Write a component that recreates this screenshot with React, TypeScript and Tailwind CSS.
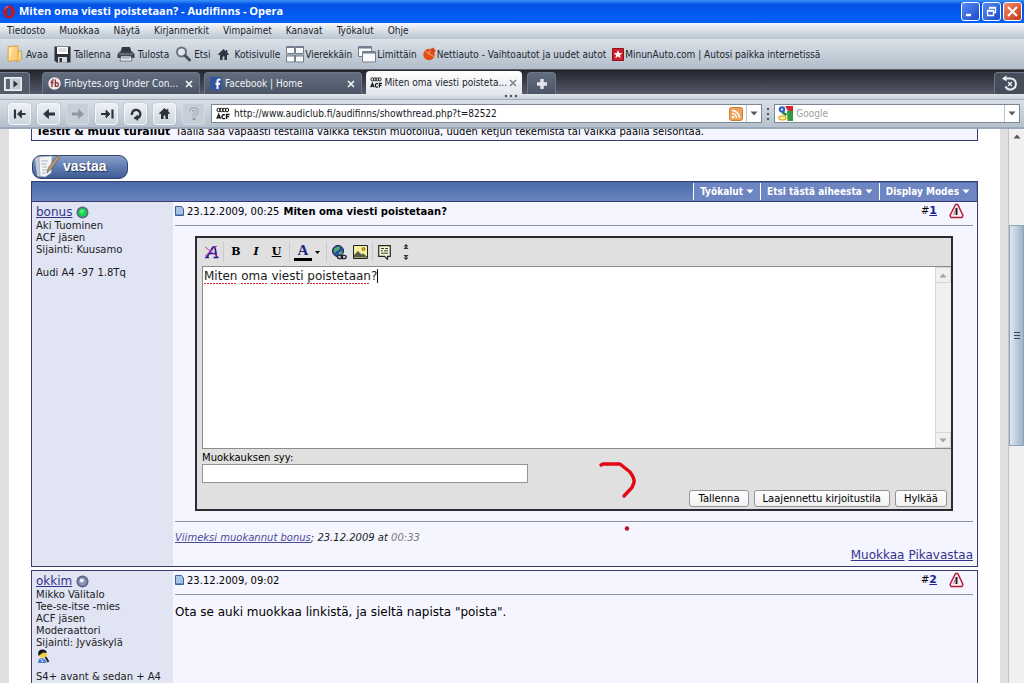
import React from "react";

const UI = "font-['DejaVu_Sans_Condensed','DejaVu_Sans',sans-serif]";

function OperaLogo() {
  return (
    <svg width="14" height="14" viewBox="0 0 14 14" aria-hidden="true">
      <ellipse cx="7" cy="7" rx="6" ry="6.5" fill="#c8141e" />
      <ellipse cx="7" cy="7" rx="2.2" ry="4.6" fill="#0a4fd0" />
      <path d="M2.5 4.5Q3.5 1.5 6.5 1.2" stroke="#f07a7a" fill="none" />
    </svg>
  );
}

function WindowButton({ label, red, children }: { label: string; red?: boolean; children: React.ReactNode }) {
  return (
    <button
      aria-label={label}
      className={
        "flex h-[19px] w-[19px] items-center justify-center rounded-[3px] border border-white " +
        (red ? "bg-linear-to-br from-[#f08a68] to-[#c8320c]" : "bg-linear-to-br from-[#5a8cf0] to-[#1c48c8]")
      }
    >
      <svg width="15" height="15" viewBox="0 0 15 15" fill="none" stroke="#fff" aria-hidden="true">
        {children}
      </svg>
    </button>
  );
}

function TitleBar() {
  return (
    <header className="flex h-[23px] shrink-0 items-center gap-[3px] bg-linear-to-b from-[#3a92f8] via-[#0452e4] via-20% to-[#0262fc] pl-[2px] pr-[2px]">
      <OperaLogo />
      <h1 className="flex-1 whitespace-nowrap font-['Open_Sans',sans-serif] text-[11px] font-bold text-white">
        Miten oma viesti poistetaan? - Audifinns - Opera
      </h1>
      <div className="flex gap-[2px]">
        <WindowButton label="Minimize">
          <path d="M3 11h5" strokeWidth="2.4" />
        </WindowButton>
        <WindowButton label="Restore">
          <path d="M5.5 5V3.5h6v5H10M5.5 4h6" strokeWidth="1.3" />
          <path d="M3.5 6.5h6v5h-6zM3.5 7h6" strokeWidth="1.3" />
        </WindowButton>
        <WindowButton label="Close" red>
          <path d="M3 3l9 9M12 3l-9 9" strokeWidth="2" />
        </WindowButton>
      </div>
    </header>
  );
}

function MenuBar() {
  const items = ["Tiedosto", "Muokkaa", "Näytä", "Kirjanmerkit", "Vimpaimet", "Kanavat", "Työkalut", "Ohje"];
  return (
    <nav className="flex h-4 shrink-0 items-center gap-[14px] bg-linear-to-b from-[#f6f8fa] to-[#b9c5d1] pl-[7px] text-[#20242c]">
      {items.map((t) => (
        <button key={t} className="leading-4">
          {t}
        </button>
      ))}
    </nav>
  );
}

const HOUSE = "M6.5 1L1 6.3l1 1L3 6.5V12h2.6V8.6h1.8V12H10V6.5l1 .8 1-1L10.300 4.600V2H8.800v1.200z";

function HomeIcon({ size = 13 }: { size?: number }) {
  return (
    <svg width={size} height={size} viewBox="0 0 13 13" fill="#30353f" aria-hidden="true">
      <path d={HOUSE} />
    </svg>
  );
}

function BookmarkIcon({ kind }: { kind: string }) {
  switch (kind) {
    case "open":
      return (
        <svg width="16" height="18" viewBox="0 0 16 18">
          <path d="M9 6h5.500v8l-3 2.500H9z" fill="#f5d68c" stroke="#c79642" strokeWidth=".8" />
          <path d="M1 1.500L11 .8v14.400L1 16.500z" fill="#fbcf7c" stroke="#d39b41" strokeWidth=".8" />
          <path d="M2 2.500l4-.3-3 12.500-1 .3z" fill="#ffe7b0" />
        </svg>
      );
    case "save":
      return (
        <svg width="17" height="17" viewBox="0 0 17 17">
          <path d="M.5.5h16v16h-14l-2-2z" fill="#2e3138" />
          <path d="M3 1h11v7H3z" fill="#fff" />
          <path d="M4.500 3h8M4.500 5h8" stroke="#b8bcc4" />
          <path d="M4 11h9v5.500H4z" fill="#d5d9df" />
          <path d="M5.500 12h2.500v4H5.500z" fill="#2e3138" />
        </svg>
      );
    case "print":
      return (
        <svg width="18" height="16" viewBox="0 0 18 16">
          <path d="M5 1h8l1.500 5h-11z" fill="#32363e" />
          <path d="M3 5.500h12l2.500 2.500v4H.5V8z" fill="#3a3f49" />
          <path d="M2 8h14" stroke="#929aa6" />
          <path d="M4 10h10l1 5H3z" fill="#eef1f4" stroke="#5a616c" strokeWidth=".8" />
          <path d="M5 12h8" stroke="#7a828e" />
        </svg>
      );
    case "find":
      return (
        <svg width="16" height="16" viewBox="0 0 16 16" fill="none">
          <circle cx="6.500" cy="6" r="4.500" stroke="#6a717d" strokeWidth="2" fill="#dfe5eb" />
          <path d="M10 9.500l4.500 4.500" stroke="#4b525e" strokeWidth="3" strokeLinecap="round" />
        </svg>
      );
    case "home":
      return <HomeIcon />;
    case "tile":
      return (
        <svg width="18" height="17" viewBox="0 0 18 17" stroke="#747e8e" fill="#f8fafc">
          <path d="M.5.5h8v7h-8zM9.500.5h8v7h-8zM.5 9h8v7h-8zM9.500 9h8v7h-8z" />
          <path d="M1 1.500h7M10 1.500h7M1 10h7M10 10h7" />
        </svg>
      );
    case "cascade":
      return (
        <svg width="18" height="17" viewBox="0 0 18 17" stroke="#747e8e" fill="#f8fafc">
          <path d="M.5.5h13v10H.5z" />
          <path d="M1 1.500h12" strokeWidth="2" />
          <path d="M4.500 5.500h13v10.500h-13z" />
          <path d="M5 6.500h12" strokeWidth="2" />
        </svg>
      );
    case "netti":
      return (
        <svg width="13" height="14" viewBox="0 0 13 14">
          <circle cx="6" cy="7.500" r="5.700" fill="#e14d18" />
          <path d="M7 2.500L10 .500l2.700 3-1.700 2.500z" fill="#d9430f" />
          <path d="M2.500 4.500l8 5M7.500 3L5 7.500" stroke="#f8b088" fill="none" strokeWidth=".9" />
        </svg>
      );
    default:
      return (
        <svg width="12" height="13" viewBox="0 0 12 13">
          <path d="M.5.5h11v12H.5z" fill="#cf1f2b" stroke="#8e1119" />
          <path d="M6 2l1.200 3 3.100.2-2.400 2 .8 3.100L6 8.600l-2.700 1.700.8-3.100-2.400-2 3.100-.2z" fill="#fff" />
        </svg>
      );
  }
}

function BookmarksBar() {
  const items: [string, string, string][] = [
    ["open", "Avaa", "gap-[3px]"],
    ["save", "Tallenna", "gap-[3px]"],
    ["print", "Tulosta", "gap-[3px]"],
    ["find", "Etsi", "gap-[3px]"],
    ["home", "Kotisivulle", "gap-[5px]"],
    ["tile", "Vierekkäin", "gap-[1px]"],
    ["cascade", "Limittäin", "gap-[1px]"],
    ["netti", "Nettiauto - Vaihtoautot ja uudet autot", "gap-[1px]"],
    ["minun", "MinunAuto.com | Autosi paikka internetissä", "gap-[1px]"],
  ];
  return (
    <nav className="flex h-[31px] shrink-0 items-center gap-[6px] border-b border-[#5a616d] bg-linear-to-b from-[#dbe2e9] to-[#b1bdca] pl-[7px] text-[#20242c]">
      {items.map(([kind, label, gap]) => (
        <button key={kind} className={"flex items-center whitespace-nowrap " + gap}>
          <BookmarkIcon kind={kind} />
          {label}
        </button>
      ))}
    </nav>
  );
}

function CloseX({ color }: { color: string }) {
  return (
    <svg width="8" height="8" viewBox="0 0 8 8" aria-hidden="true">
      <path d="M1 1l6 6M7 1L1 7" stroke={color} strokeWidth="1.700" />
    </svg>
  );
}

function AcfIcon() {
  return (
    <svg width="14" height="13" viewBox="0 0 14 13" aria-hidden="true" fill="none" stroke="#111">
      <ellipse cx="2.600" cy="3" rx="1.600" ry="1.800" />
      <ellipse cx="5.400" cy="3" rx="1.600" ry="1.800" />
      <ellipse cx="8.200" cy="3" rx="1.600" ry="1.800" />
      <ellipse cx="11" cy="3" rx="1.600" ry="1.800" />
      <path d="M.8 11.800L2.700 7.300l1.900 4.500M1.500 10.500h2.400M9 8q-3-1-3 1.700t3 1.600M10.500 12V7.500h3M10.500 9.700h2.500" strokeWidth="1.300" />
    </svg>
  );
}

function TabStrip() {
  const idle =
    "flex h-[22px] w-[158px] items-center gap-[3px] rounded-t-[4px] border-x border-t border-[#6b7688] bg-linear-to-b from-[#626d7e] to-[#4b5566] pl-[5px] pr-[6px] text-[#f2f4f8]";
  return (
    <div className="flex h-6 shrink-0 items-end bg-linear-to-b from-[#24262e] to-[#565a6a]">
      <button
        aria-label="Panels"
        className="mr-[12px] flex h-[22px] w-[30px] items-center rounded-tr-[4px] border-r border-t border-[#77808e] bg-[#515b6a] pl-1"
      >
        <svg width="18" height="14" viewBox="0 0 18 14">
          <path d="M.5.5h17v13H.5z" fill="#d5dbe3" stroke="#eef1f4" />
          <path d="M2 2h4v10H2z" fill="#5b6575" />
          <path d="M8 2h8v10H8z" fill="#c1c9d3" />
          <path d="M9.500 3.500l4.500 3.500-4.500 3.500z" fill="#2c323c" />
        </svg>
      </button>
      <div className="mr-[4px]">
        <div className={idle}>
          <svg width="13" height="13" viewBox="0 0 13 13">
            <circle cx="6.500" cy="6.500" r="6.200" fill="#efe6e6" />
            <path d="M5.800 3Q3.800 2.500 4 4.500V10M2.600 5.500h3M7.300 2.500V9.500M7.300 6q3-1 3 1.500t-3 1.800" stroke="#8d2b35" fill="none" strokeWidth="1.300" />
          </svg>
          <span className="flex-1 whitespace-nowrap">Finbytes.org Under Con...</span>
          <button aria-label="Close tab">
            <CloseX color="#f0f2f6" />
          </button>
        </div>
      </div>
      <div className="mr-[4px]">
        <div className={idle}>
          <svg width="12" height="13" viewBox="0 0 12 13">
            <path d="M0 0h12v13H0z" fill="#3355a0" />
            <path d="M10.500 2.500H9Q7.500 2.500 7.500 4.500V12M5.500 6.800h4.500" stroke="#fff" fill="none" strokeWidth="2" />
          </svg>
          <span className="flex-1 whitespace-nowrap">Facebook | Home</span>
          <button aria-label="Close tab">
            <CloseX color="#f0f2f6" />
          </button>
        </div>
      </div>
      <div className="mr-[5px] flex h-[23px] w-[156px] items-center gap-[2px] rounded-t-[4px] bg-linear-to-b from-white to-[#e2e7ec] pl-1 pr-[5px] text-[#20242c]">
        <AcfIcon />
        <span className="flex-1 whitespace-nowrap">Miten oma viesti poisteta...</span>
        <button aria-label="Close tab">
          <CloseX color="#85888e" />
        </button>
      </div>
      <button
        aria-label="New tab"
        className="flex h-[22px] w-[29px] items-center justify-center rounded-t-[4px] border-x border-t border-[#6b7688] bg-linear-to-b from-[#626d7e] to-[#4b5566]"
      >
        <svg width="12" height="12" viewBox="0 0 12 12">
          <path d="M6 1v10M1 6h10" stroke="#e3e7ec" strokeWidth="3.400" />
        </svg>
      </button>
      <button
        aria-label="Closed tabs"
        className="ml-auto flex h-[22px] w-[30px] items-center justify-center rounded-tl-[4px] border-l border-t border-[#6b7688] bg-[#464c59]"
      >
        <svg width="17" height="17" viewBox="0 0 17 17" fill="none" stroke="#eef1f4">
          <path d="M4 3.500h5.500a5.500 5.500 0 1 1-5 8" strokeWidth="2" />
          <path d="M5.500.5v6L1 3.500z" fill="#eef1f4" stroke="none" />
          <path d="M7 7l4 4M11 7l-4 4" strokeWidth="1.300" />
        </svg>
      </button>
    </div>
  );
}

function NavButton({ label, dim, children }: { label: string; dim?: boolean; children: React.ReactNode }) {
  return (
    <button
      aria-label={label}
      className={
        "flex h-[22px] w-[23px] items-center justify-center rounded-[3px] border " +
        (dim ? "border-[#d2d9e0] bg-[#c6cfd8]" : "border-[#f4f7f9] bg-linear-to-b from-[#edf1f5] to-[#ccd5de] shadow-[0_0_1px_#76808c]")
      }
    >
      <svg width="14" height="14" viewBox="0 0 14 14" fill="none" stroke={dim ? "#8e98a4" : "#2c323c"} strokeWidth="2.200">
        {children}
      </svg>
    </button>
  );
}

function DropArrow({ className }: { className?: string }) {
  return (
    <svg width="8" height="5" viewBox="0 0 8 5" className={className} aria-hidden="true">
      <path d="M.5.500h7L4 4.500z" fill="currentColor" />
    </svg>
  );
}

function AddressBar() {
  return (
    <>
      <div className="flex h-[6px] shrink-0 items-start border-b border-[#a3adb9] bg-linear-to-b from-[#e2e7ec] to-[#c9d2db] pl-[504px]">
        <svg width="15" height="4" viewBox="0 0 15 4" fill="#4b525e" aria-hidden="true">
          <circle cx="2" cy="2" r="1.200" />
          <circle cx="7" cy="2" r="1.200" />
          <circle cx="12" cy="2" r="1.200" />
        </svg>
      </div>
      <div className="flex h-[29px] shrink-0 items-center border-b-2 border-[#9aa8b7] bg-linear-to-b from-[#d8dfe6] to-[#b5c1ce] pl-2 pr-1">
        <div className="flex gap-[6px]">
          <NavButton label="Rewind">
            <path d="M2 2.500v9M12.500 7H6" />
            <path d="M8.500 3L4.500 7l4 4z" fill="#2c323c" strokeWidth=".8" />
          </NavButton>
          <NavButton label="Back">
            <path d="M13 7H5" strokeWidth="3" />
            <path d="M6.500 2.500L1.500 7l5 4.500z" fill="#2c323c" strokeWidth=".8" />
          </NavButton>
          <NavButton label="Forward" dim>
            <path d="M1 7h8" strokeWidth="3" />
            <path d="M7.500 2.500l5 4.500-5 4.500z" fill="#8e98a4" strokeWidth=".8" />
          </NavButton>
          <NavButton label="Fast forward">
            <path d="M12.500 2.500v9M1 7h6" />
            <path d="M6 3l4 4-4 4z" fill="#2c323c" strokeWidth=".8" />
          </NavButton>
          <NavButton label="Reload">
            <path d="M3 8a4.200 4.200 0 1 1 5 3.200" strokeWidth="2.400" />
            <path d="M8.800 8v5.500L4.800 11z" fill="#2c323c" strokeWidth=".5" />
          </NavButton>
          <NavButton label="Home">
            <path d={HOUSE} fill="#2c323c" stroke="none" />
          </NavButton>
          <NavButton label="Wand" dim>
            <path d="M4 4.800Q4 2 7 2t3 2.600Q10 6 8.500 6.800T7 9.500M7 11v2" strokeWidth="3" />
            <path d="M4 4.800Q4 2 7 2t3 2.600Q10 6 8.500 6.800T7 9.500" stroke="#e3e8ed" strokeWidth="1.200" />
          </NavButton>
        </div>
        <div className="ml-[6px] flex h-[19px] flex-[552] items-center border border-[#7d8894] bg-white">
          <span className="px-1">
            <AcfIcon />
          </span>
          <input
            aria-label="Address"
            defaultValue="http://www.audiclub.fi/audifinns/showthread.php?t=82522"
            className="min-w-0 flex-1 text-[#14171c] outline-none"
          />
          <svg width="14" height="14" viewBox="0 0 14 14" className="mr-[3px]" aria-hidden="true">
            <rect x=".5" y=".5" width="13" height="13" rx="2" fill="#eda25a" stroke="#cf7f33" />
            <circle cx="4" cy="10" r="1.300" fill="#fff" />
            <path d="M3 6.500A4.500 4.500 0 0 1 7.500 11M3 3.500A7.500 7.500 0 0 1 10.500 11" stroke="#fff" strokeWidth="1.500" fill="none" />
          </svg>
          <button aria-label="Address history" className="flex h-full w-[15px] items-center justify-center border-l border-[#b9c1ca] text-[#545a64]">
            <DropArrow />
          </button>
        </div>
        <svg width="12" height="16" viewBox="0 0 12 16" fill="#4b525e" aria-hidden="true">
          <path d="M5 2h2v2H5zM5 7h2v2H5zM5 12h2v2H5z" />
        </svg>
        <div className="flex h-[19px] flex-[245] items-center border border-[#7d8894] bg-white">
          <svg width="15" height="15" viewBox="0 0 15 15" className="mx-[3px]" aria-hidden="true">
            <path d="M7 0h8v5H10z" fill="#d5252c" />
            <path d="M9 5h6v10H9.500z" fill="#2f9a41" />
            <path d="M0 0h7l2 6-3 9H0z" fill="#fff" />
            <circle cx="4" cy="3.500" r="2.200" fill="none" stroke="#2b62c4" strokeWidth="2.200" />
            <path d="M4.500 6.500l4 2.500" stroke="#1d7d38" strokeWidth="2.400" />
            <ellipse cx="4.500" cy="12" rx="3.500" ry="2" fill="#fff3b0" stroke="#e3b52c" strokeWidth="1.600" />
          </svg>
          <input aria-label="Search" placeholder="Google" className="min-w-0 flex-1 outline-none placeholder:text-[#a0a0a0]" />
          <button aria-label="Search engines" className="flex h-full w-[15px] items-center justify-center border-l border-[#b9c1ca] text-[#545a64]">
            <DropArrow />
          </button>
        </div>
      </div>
    </>
  );
}

function ReplyButton() {
  return (
    <button className="ml-px mt-[14px] flex h-6 w-[96px] items-center rounded-[9px] border border-[#33466f] bg-linear-to-b from-[#8aa0c9] via-[#5f7cb2] to-[#3f5c96]">
      <svg width="28" height="24" viewBox="0 0 28 24" aria-hidden="true">
        <path d="M2 3l4-1 2 20-4-1z" fill="#c3cad6" />
        <path d="M6 2l13-1-1 17-6 4-5-1z" fill="#f4f5f7" stroke="#a7adb8" strokeWidth=".7" />
        <path d="M8 6h7M8 9h6M9 12h5M9 15h6M9 18h4" stroke="#a3a9b5" strokeWidth=".9" />
        <path d="M25 .5l2 2-9 11.500-4 4 1.500-5.500z" fill="#b99a7b" stroke="#6f5741" strokeWidth=".7" />
      </svg>
      <span className="ml-[2px] pb-[2px] font-['Liberation_Sans',sans-serif] text-[14px] font-bold text-white [text-shadow:1px_1px_1px_#1f2f55]">
        vastaa
      </span>
    </button>
  );
}

function WarnIcon() {
  return (
    <svg width="15" height="16" viewBox="0 0 15 16" fill="none" aria-hidden="true">
      <path d="M6.500 1.500h2.300L14 12.500l-1 2H2l-1-2z" stroke="#b3183a" strokeWidth="1.500" strokeLinejoin="round" fill="#fbeef1" />
      <path d="M7.500 5v7" stroke="#15151c" strokeWidth="1.900" />
      <path d="M4.500 12L7 5.500" stroke="#c2536c" strokeWidth=".8" />
    </svg>
  );
}

function PostHead({ date, title, no }: { date: string; title?: string; no: number }) {
  return (
    <div className="flex h-[24px] items-center border-b border-[#9293a8] pb-[5px]">
      <svg width="9" height="10" viewBox="0 0 9 10" className="mr-[3px]" aria-hidden="true">
        <path d="M.5.500h6L8.500 3v6.500h-8z" fill="#a9c3e4" stroke="#3e5f96" />
        <path d="M1 8.500h7" stroke="#6b8fc4" />
      </svg>
      <span>{date}</span>
      {title && <strong className="ml-[4px]">{title}</strong>}
      <span className="ml-auto">
        #
        <a href="#post" className="text-[11px] font-bold text-[#22229c] underline">
          {no}
        </a>
      </span>
      <a href="#report" aria-label="Report post" className="ml-3 mr-[9px]">
        <WarnIcon />
      </a>
    </div>
  );
}

function UserLink({ name, online }: { name: string; online?: boolean }) {
  return (
    <div className="flex h-[18px] items-center gap-1 pt-[2px]">
      <a href="#user" className="text-[12px] text-[#33338c] underline">
        {name}
      </a>
      <svg width="13" height="13" viewBox="0 0 13 13" aria-hidden="true">
        <circle cx="6.500" cy="6.500" r="6" fill="#5c6487" />
        <circle cx="6.500" cy="6.500" r="4.300" fill={online ? "#17d44c" : "#8d96b8"} />
        <circle cx="5.800" cy="5.500" r="2" fill={online ? "#4df07a" : "#eef1fa"} />
      </svg>
    </div>
  );
}

function EditorToolbar() {
  return (
    <div className="flex h-[28px] items-center text-black">
      <button aria-label="Remove formatting" className="mx-[2px]">
        <svg width="15" height="14" viewBox="0 0 15 14" fill="none">
          <path d="M3 12L9 2h2l1.500 10M5.500 8.500h6M1 12.500h4M9.500 12.500h5" stroke="#2a1a96" strokeWidth="1.700" />
          <path d="M1 2l13 10M13 1L1 11" stroke="#c23cae" strokeWidth="1" />
        </svg>
      </button>
      <i className="mx-[2px] h-5 border-l border-[#cbcbcb]" />
      <button aria-label="Bold" className="w-[20px] font-['DejaVu_Serif',serif] text-[11px] font-bold">B</button>
      <button aria-label="Italic" className="w-[20px] font-['DejaVu_Serif',serif] text-[11px] font-bold italic">I</button>
      <button aria-label="Underline" className="w-[21px] font-['DejaVu_Serif',serif] text-[11px] underline font-bold">U</button>
      <i className="mx-[2px] h-5 border-l border-[#cbcbcb]" />
      <button aria-label="Text colour" className="flex w-[30px] items-center gap-[3px] pl-[2px]">
        <span className="flex h-[18px] w-[18px] items-start justify-center border-b-[3px] border-black font-['Liberation_Serif',serif] text-[15px] leading-[15px] font-bold text-[#1f2480]">
          A
        </span>
        <svg width="5" height="3" viewBox="0 0 5 3">
          <path d="M0 0h5L2.500 3z" />
        </svg>
      </button>
      <i className="ml-1 mr-[5px] h-5 border-l border-[#cbcbcb]" />
      <button aria-label="Insert link">
        <svg width="15" height="15" viewBox="0 0 15 15">
          <circle cx="6" cy="6" r="5.500" fill="#2b4fa8" stroke="#14224e" />
          <path d="M2 4q3-3 6-2l-1 3-3 1-1 2-1-1zM7 7l4-1-1 3-3 1z" fill="#55b06a" />
          <ellipse cx="8" cy="12" rx="2.600" ry="1.700" fill="#dfe2e8" stroke="#20242c" strokeWidth="1.200" />
          <ellipse cx="11.700" cy="12" rx="2.600" ry="1.700" fill="none" stroke="#20242c" strokeWidth="1.200" />
        </svg>
      </button>
      <button aria-label="Insert image" className="ml-[6px]">
        <svg width="15" height="14" viewBox="0 0 15 14">
          <path d="M.5.500h14v13H.5z" fill="#f5ee9a" stroke="#20242c" />
          <circle cx="10.500" cy="4" r="1.500" fill="#e3a21e" stroke="#6b4a05" strokeWidth=".6" />
          <path d="M1 12.500V10l4-4 3.500 3.500L10 8.500l4 3v1z" fill="#5a5b42" />
        </svg>
      </button>
      <i className="ml-[4px] mr-[5px] h-5 border-l border-[#cbcbcb]" />
      <button aria-label="Quote">
        <svg width="13" height="15" viewBox="0 0 13 15">
          <path d="M.700.700h11.600v10.600H9.500v3L6.500 11.300H.700z" fill="#f8f6d2" stroke="#26262a" strokeWidth="1.200" />
          <path d="M3 3.500h3M7 3.500h3M3 5.800h2M6 5.800h4M3 8.200h7" stroke="#3a3a3e" />
        </svg>
      </button>
      <button aria-label="Resize editor" className="ml-3">
        <svg width="6" height="16" viewBox="0 0 6 16">
          <path d="M3 0l2.500 2.500h-5zM3 2.500L5.500 5h-5zM3 16L.500 13.500h5zM3 13.500L.500 11h5z" fill="#2b2b2b" />
        </svg>
      </button>
    </div>
  );
}

function FormButton({ children }: { children: React.ReactNode }) {
  return (
    <button className="h-[17px] rounded-[3px] border border-[#949494] bg-linear-to-b from-white to-[#f1f1f1] px-2 leading-[15px]">
      {children}
    </button>
  );
}

function Editor() {
  return (
    <form className="relative ml-5 mr-[20px] mt-[10px] border-2 border-[#2c2c30] bg-[#e0e0e0] pl-[5px]" onSubmit={(e) => e.preventDefault()}>
      <EditorToolbar />
      <div className="relative flex h-[183px] border border-r-0 border-[#8c8c8c] bg-white">
        <textarea
          aria-label="Message"
          spellCheck={false}
          defaultValue="Miten oma viesti poistetaan?"
          className="block h-full min-w-0 flex-1 resize-none overflow-hidden px-[1px] py-[2px] font-['DejaVu_Sans',sans-serif] text-[12px] leading-[15px] text-[#1a1a1a] outline-none"
        />
        <svg className="pointer-events-none absolute left-[1px] top-0 h-[18px] w-[180px]" viewBox="0 0 180 18" aria-hidden="true">
          <path d="M0 16.500h33M37 16.500h26M67 16.500h32M103 16.500h63" stroke="#e02434" strokeDasharray="2 1" />
          <path d="M173.500 2v14" stroke="#111" />
        </svg>
        <div className="flex w-[16px] flex-col items-center justify-between border-l border-[#d6d6d6] bg-[#f0f0f0] text-[#a3a3a3]">
          <span className="flex h-4 w-full items-center justify-center border border-l-0 border-[#d6d6d6]">
            <DropArrow className="rotate-180" />
          </span>
          <span className="flex h-4 w-full items-center justify-center border border-l-0 border-[#d6d6d6]">
            <DropArrow />
          </span>
        </div>
      </div>
      <div className="flex h-[60px] flex-col items-start pt-[3px]">
        <label htmlFor="reason" className="leading-[12px]">
          Muokkauksen syy:
        </label>
        <input id="reason" className="h-[19px] w-[43.500%] border border-[#949494] bg-white px-1 outline-none" />
        <div className="mt-[7px] flex gap-[5px] self-end pr-[4px]">
          <FormButton>Tallenna</FormButton>
          <FormButton>Laajennettu kirjoitustila</FormButton>
          <FormButton>Hylkää</FormButton>
        </div>
      </div>
      <svg className="pointer-events-none absolute left-[401px] top-[222px]" width="42" height="74" viewBox="0 0 42 74" fill="none" aria-hidden="true">
        <path d="M3 5l2-1h17l10 8q5 7 4 10.500l-2 5-8 8.500" stroke="#e30613" strokeWidth="3.400" strokeLinecap="round" strokeLinejoin="round" />
        <circle cx="29" cy="68.500" r="2.200" fill="#c40f2c" />
      </svg>
    </form>
  );
}

function Thread() {
  const post = "flex border border-[#3b3b74] bg-[#f5f5ff]";
  const side = "w-[141px] shrink-0 bg-[#e1e4f2] pl-1 leading-[12px] text-[#1b1b24]";
  return (
    <main className="min-w-0 flex-1 bg-white pl-[22px] pr-[22px]">
      <section className="flex h-[12px] items-end overflow-hidden border border-t-0 border-[#3b3b74] bg-[#f5f5ff] pb-[2px] pl-1">
        <p className="whitespace-nowrap leading-[13px]">
          <strong className="mr-[2px] text-[11px]">Testit &amp; muut turallut</strong> Täällä saa vapaasti testailla vaikka tekstin muotoilua, uuden ketjun
          tekemistä tai vaikka päällä seisontaa.
        </p>
      </section>
      <ReplyButton />
      <div className={"mt-[2px] flex h-[21px] justify-end border border-[#3b3b74] bg-linear-to-b from-[#4a6ca8] to-[#6a84c0] p-px font-bold text-white " + UI}>
        {["Työkalut", "Etsi tästä aiheesta", "Display Modes"].map((t) => (
          <button key={t} className="flex items-center gap-[3px] whitespace-nowrap border-l border-white bg-[#6d86c2] px-[6px]">
            {t}
            <DropArrow />
          </button>
        ))}
      </div>
      <article className={post + " border-t-0"}>
        <aside className={side}>
          <UserLink name="bonus" online />
          <p>
            Aki Tuominen
            <br />
            ACF jäsen
            <br />
            Sijainti: Kuusamo
          </p>
          <p className="mt-[11px]">Audi A4 -97 1.8Tq</p>
        </aside>
        <div className="min-w-0 flex-1 pl-[2px] pr-1">
          <PostHead date="23.12.2009, 00:25" title="Miten oma viesti poistetaan?" no={1} />
          <Editor />
          <div className="mt-[10px] border-t border-[#9293a8] pt-[8px]">
            <p className="italic leading-[15px] text-[#1b1b24]">
              <a href="#edits" className="text-[#4a4a96] underline">
                Viimeksi muokannut bonus
              </a>
              ; 23.12.2009 at <span className="text-[#777]">00:33</span>
            </p>
            <p className="flex justify-end gap-1 pb-[3px] pt-[2px] text-[12px] leading-[16px] text-[#33338c]">
              <a href="#edit" className="underline">
                Muokkaa
              </a>
              <a href="#quick" className="underline">
                Pikavastaa
              </a>
            </p>
          </div>
        </div>
      </article>
      <article className={post + " mt-[3px]"}>
        <aside className={side}>
          <UserLink name="okkim" />
          <p>
            Mikko Välitalo
            <br />
            Tee-se-itse -mies
            <br />
            ACF jäsen
            <br />
            Moderaattori
            <br />
            Sijainti: Jyväskylä
          </p>
          <svg width="14" height="15" viewBox="0 0 14 15" className="block" aria-hidden="true">
            <path d="M2 14q0-5 4-5 4 1 4.500 5z" fill="#4b7fd0" />
            <circle cx="7" cy="5" r="3.800" fill="#f2cf3a" />
            <path d="M2.500 7Q1 1 6 .5q5 0 4.500 3.500L7 3.500 5 5z" fill="#15151c" />
            <path d="M9.500 8l3 5" stroke="#222" strokeWidth="2" />
            <path d="M5 10l2 3" stroke="#fff" />
          </svg>
          <p className="mt-[7px] pb-3">S4+ avant &amp; sedan + A4</p>
        </aside>
        <div className="min-w-0 flex-1 pl-[2px] pr-1">
          <PostHead date="23.12.2009, 09:02" no={2} />
          <p className="pt-[9px] text-[12px] leading-[16px]">Ota se auki muokkaa linkistä, ja sieltä napista "poista".</p>
        </div>
      </article>
    </main>
  );
}

function PageScrollbar() {
  return (
    <div className="flex w-4 shrink-0 flex-col items-center border-l border-[#c3c3c3] bg-[#f0f0f0] text-[#555]" aria-hidden="true">
      <div className="flex h-[96px] shrink-0 items-start pt-[5px]">
        <DropArrow className="rotate-180" />
      </div>
      <div className="flex h-[221px] w-full shrink-0 items-center justify-center border border-[#8fa3b8] bg-linear-to-r from-[#dfe8f1] to-[#9fb3c8]">
        <svg width="6" height="7" viewBox="0 0 6 7">
          <path d="M0 .5h6M0 3.500h6M0 6.500h6" stroke="#3c4a5c" />
        </svg>
      </div>
    </div>
  );
}

export default function App() {
  return (
    <div className={"flex h-screen flex-col overflow-hidden text-[10px] " + UI}>
      <TitleBar />
      <MenuBar />
      <BookmarksBar />
      <TabStrip />
      <AddressBar />
      <div className="flex min-h-0 flex-1 overflow-hidden bg-[#e0e0e0] pl-[9px] font-['DejaVu_Sans',sans-serif]">
        <Thread />
        <div className="w-2 shrink-0" />
        <PageScrollbar />
      </div>
    </div>
  );
}
